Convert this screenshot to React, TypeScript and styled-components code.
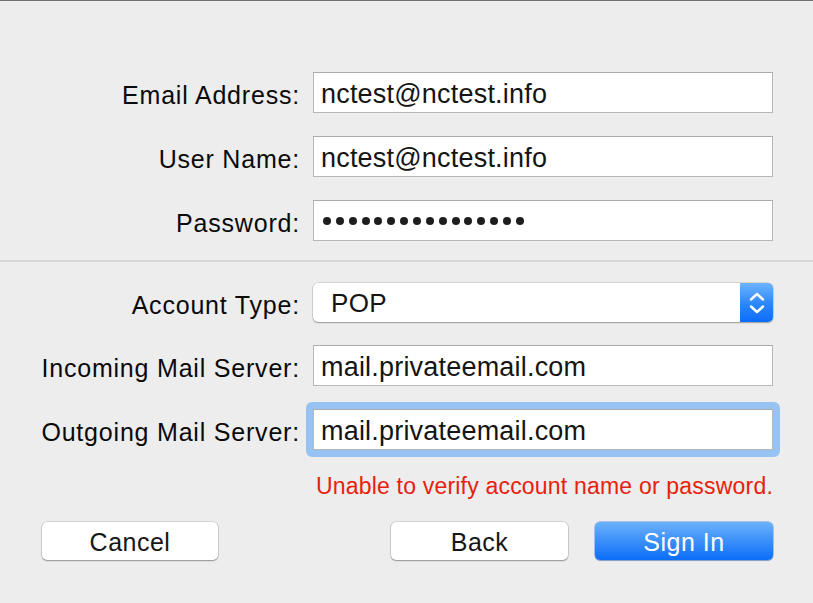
import React from "react";
import styled, { createGlobalStyle } from "styled-components";

const GlobalStyle = createGlobalStyle`
    html, body {
        margin: 0;
        padding: 0;
        background: #ededed;
    }
    body {
        font-family: "Liberation Sans", Arial, sans-serif;
        color: #111;
    }
`;

const Window = styled.div`
    width: 813px;
    height: 603px;
    box-sizing: border-box;
    border-top: 1px solid #727272;
    background: #ededed;
    padding-top: 71px;
`;

const FormGrid = styled.div`
    display: grid;
    grid-template-columns: 260px 460px;
    column-gap: 13px;
    row-gap: 23px;
    padding: 0 40px;
    align-items: center;
`;

const Label = styled.label`
    text-align: right;
    font-size: 25px;
    letter-spacing: 0.8px;
    padding-top: 5px;
    color: #0a0a0a;
    white-space: nowrap;
`;

const Field = styled.div<{ $focused?: boolean }>`
    position: relative;
    height: 41px;
    box-sizing: border-box;
    background: #fff;
    border: 1px solid #b7b7b7;
    border-top-color: #aaaaaa;
    display: flex;
    align-items: center;
    padding: 4px 0 0 7px;
    font-size: 27px;
    letter-spacing: 0.2px;
    color: #141414;

    &::after {
        content: "";
        display: ${(p) => (p.$focused ? "block" : "none")};
        position: absolute;
        inset: -8px;
        border: 7px solid #97c3f2;
        border-radius: 6px;
        pointer-events: none;
    }
`;

const Dots = styled.div`
    display: flex;
    gap: 4.87px;
    padding-left: 2px;
    margin-top: -4px;
`;

const Dot = styled.span`
    width: 8px;
    height: 8px;
    border-radius: 50%;
    background: #1e1e1e;
`;

const Divider = styled.hr`
    border: none;
    height: 2px;
    background: #d8d8d8;
    margin: 19px 0 21px;
`;

const Select = styled.div`
    height: 39px;
    display: flex;
    border-radius: 5px;
    background: #fff;
    box-shadow: 0 0 0 0.5px rgba(0, 0, 0, 0.18), 0 1px 1.5px rgba(0, 0, 0, 0.28);
    overflow: hidden;
`;

const SelectValue = styled.div`
    flex: 1;
    display: flex;
    align-items: center;
    padding: 2px 0 0 18px;
    font-size: 26px;
    letter-spacing: 0.4px;
    color: #141414;
`;

const Stepper = styled.div`
    width: 33px;
    display: flex;
    align-items: center;
    justify-content: center;
    background: linear-gradient(#6db4fc, #2a86fa 55%, #0c6cf8);
`;

const Message = styled.div`
    margin: 22px 40px 0 313px;
    text-align: right;
    font-size: 23px;
    letter-spacing: 0.2px;
    line-height: 28px;
    white-space: nowrap;
    color: #e8210f;
`;

const Buttons = styled.div`
    display: flex;
    align-items: center;
    padding: 0 40px 0 42px;
    margin-top: 22px;
`;

const Spacer = styled.div<{ $fixed?: number }>`
    flex: ${(p) => (p.$fixed ? `0 0 ${p.$fixed}px` : "1")};
`;

const Button = styled.button<{ $primary?: boolean; $width: number }>`
    width: ${(p) => p.$width}px;
    height: 38px;
    border: none;
    border-radius: 5px;
    font-family: inherit;
    font-size: 25px;
    letter-spacing: 0.5px;
    padding: 3px 0 0;
    color: ${(p) => (p.$primary ? "#fff" : "#161616")};
    background: ${(p) =>
        p.$primary ? "linear-gradient(#6cb2fc, #3b8ffa 50%, #0b6ef8)" : "#fff"};
    box-shadow: ${(p) =>
        p.$primary
            ? "0 0 0 0.5px rgba(10, 90, 220, 0.6), 0 1px 1px rgba(0, 0, 0, 0.2)"
            : "0 0 0 0.5px rgba(0, 0, 0, 0.2), 0 1px 1.5px rgba(0, 0, 0, 0.3)"};
`;

const Chevrons = () => (
    <svg width="16" height="26" viewBox="0 0 16 26">
        <polyline points="2,9.5 8,4 14,9.5" fill="none" stroke="#fff" strokeWidth="2.4" strokeLinecap="round" strokeLinejoin="round" />
        <polyline points="2,16.5 8,22 14,16.5" fill="none" stroke="#fff" strokeWidth="2.4" strokeLinecap="round" strokeLinejoin="round" />
    </svg>
);

const App = () => {
    return (
        <>
            <GlobalStyle />
            <Window>
                <FormGrid>
                    <Label>Email Address:</Label>
                    <Field>nctest@nctest.info</Field>
                    <Label>User Name:</Label>
                    <Field>nctest@nctest.info</Field>
                    <Label>Password:</Label>
                    <Field>
                        <Dots>
                            {Array.from({ length: 16 }).map((_, i) => (
                                <Dot key={i} />
                            ))}
                        </Dots>
                    </Field>
                </FormGrid>
                <Divider />
                <FormGrid>
                    <Label>Account Type:</Label>
                    <Select>
                        <SelectValue>POP</SelectValue>
                        <Stepper>
                            <Chevrons />
                        </Stepper>
                    </Select>
                    <Label>Incoming Mail Server:</Label>
                    <Field>mail.privateemail.com</Field>
                    <Label>Outgoing Mail Server:</Label>
                    <Field $focused>mail.privateemail.com</Field>
                </FormGrid>
                <Message>Unable to verify account name or password.</Message>
                <Buttons>
                    <Button $width={176}>Cancel</Button>
                    <Spacer />
                    <Button $width={177}>Back</Button>
                    <Spacer $fixed={27} />
                    <Button $primary $width={178}>Sign In</Button>
                </Buttons>
            </Window>
        </>
    );
};

export default App;
